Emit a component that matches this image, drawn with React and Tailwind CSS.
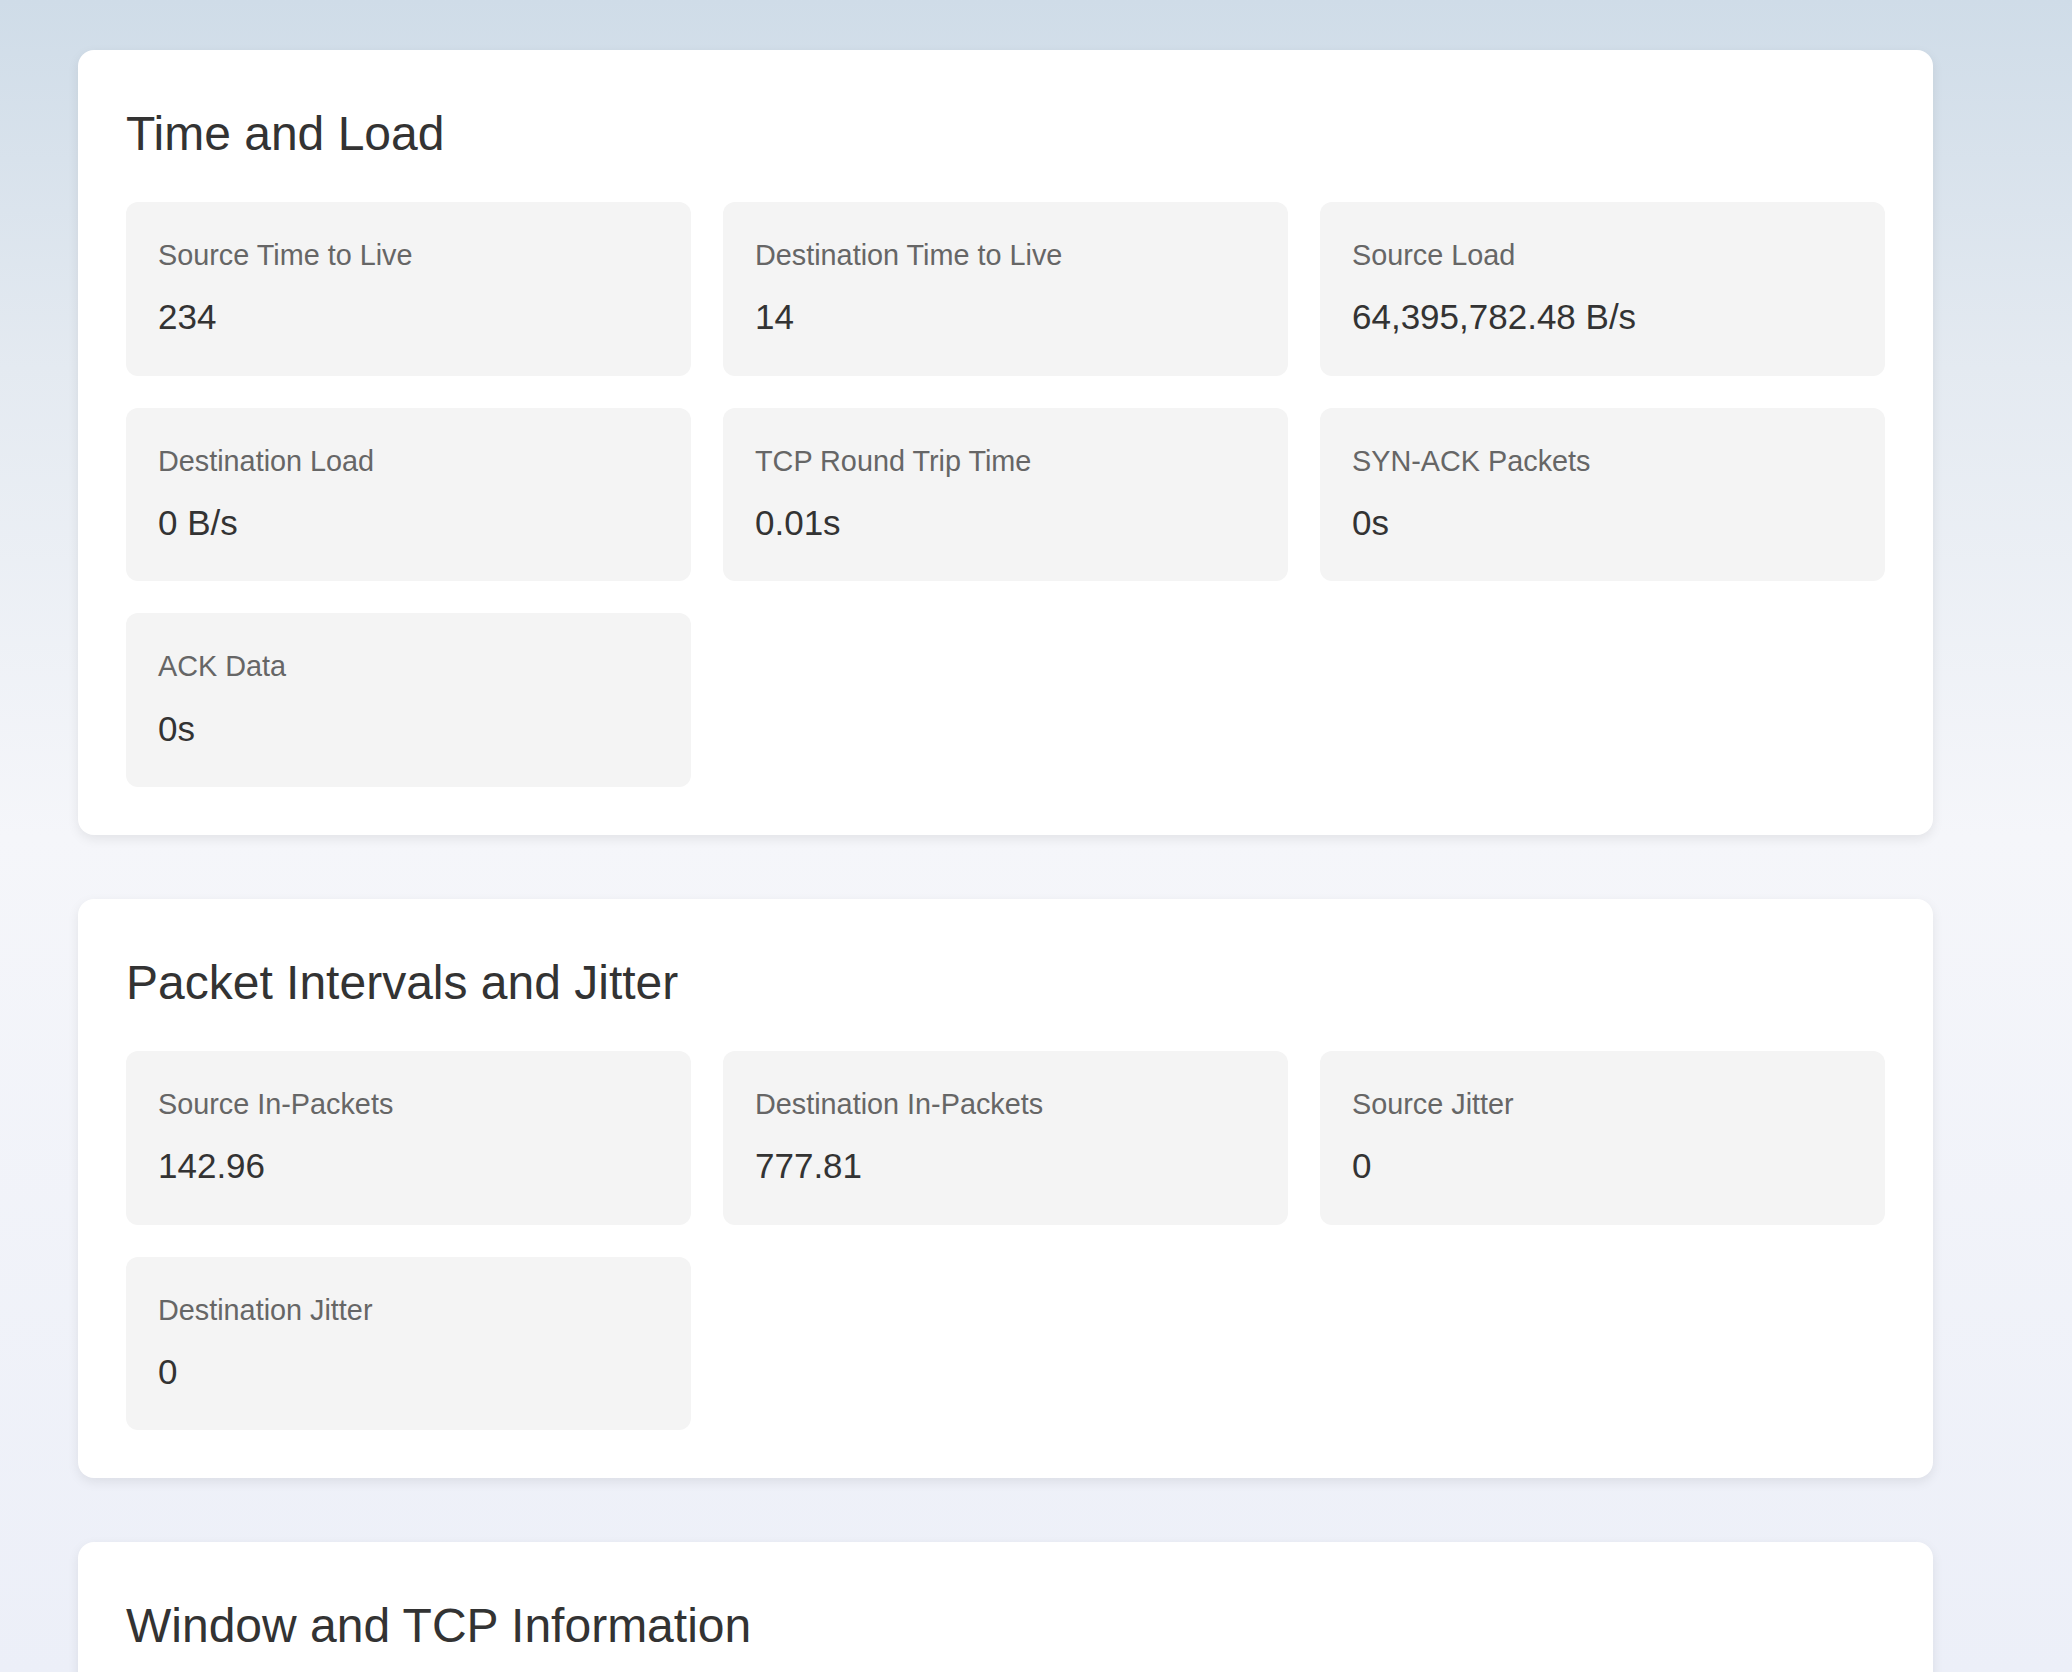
import React from "react";

const sections = [
  {
    title: "Time and Load",
    items: [
      ["Source Time to Live", "234"],
      ["Destination Time to Live", "14"],
      ["Source Load", "64,395,782.48 B/s"],
      ["Destination Load", "0 B/s"],
      ["TCP Round Trip Time", "0.01s"],
      ["SYN-ACK Packets", "0s"],
      ["ACK Data", "0s"],
    ],
  },
  {
    title: "Packet Intervals and Jitter",
    items: [
      ["Source In-Packets", "142.96"],
      ["Destination In-Packets", "777.81"],
      ["Source Jitter", "0"],
      ["Destination Jitter", "0"],
    ],
  },
  {
    title: "Window and TCP Information",
    items: [],
  },
];

function Tile({ label, value }) {
  return (
    <div className="bg-[#f4f4f4] rounded-xl px-8 py-8">
      <div className="text-[28.8px] leading-[1.5] text-[#666666] mb-[14px]">{label}</div>
      <div className="text-[35px] leading-[1.5] text-[#333333]">{value}</div>
    </div>
  );
}

export default function App() {
  return (
    <div
      className="h-[1672px] overflow-hidden w-full bg-[linear-gradient(180deg,#cfdce8_0%,#e4eaf1_22%,#f5f6fa_50%,#eceff8_100%)] pt-[50px]"
      style={{ fontFamily: '"Liberation Sans", Arial, Helvetica, sans-serif' }}
    >
      <div className="ml-[78px] w-[1855px] flex flex-col gap-16">
        {sections.map((s) => (
          <section
            key={s.title}
            className="bg-white rounded-2xl p-12 shadow-[0_4px_12px_rgba(0,0,0,0.08)]"
          >
            <h2 className="text-[48px] leading-[1.5] text-[#333333] font-normal">{s.title}</h2>
            {s.items.length > 0 ? (
              <div className="grid grid-cols-3 gap-8 mt-8">
                {s.items.map(([l, v]) => (
                  <Tile key={l} label={l} value={v} />
                ))}
              </div>
            ) : (
              <div className="h-[200px] mt-8" />
            )}
          </section>
        ))}
      </div>
    </div>
  );
}
